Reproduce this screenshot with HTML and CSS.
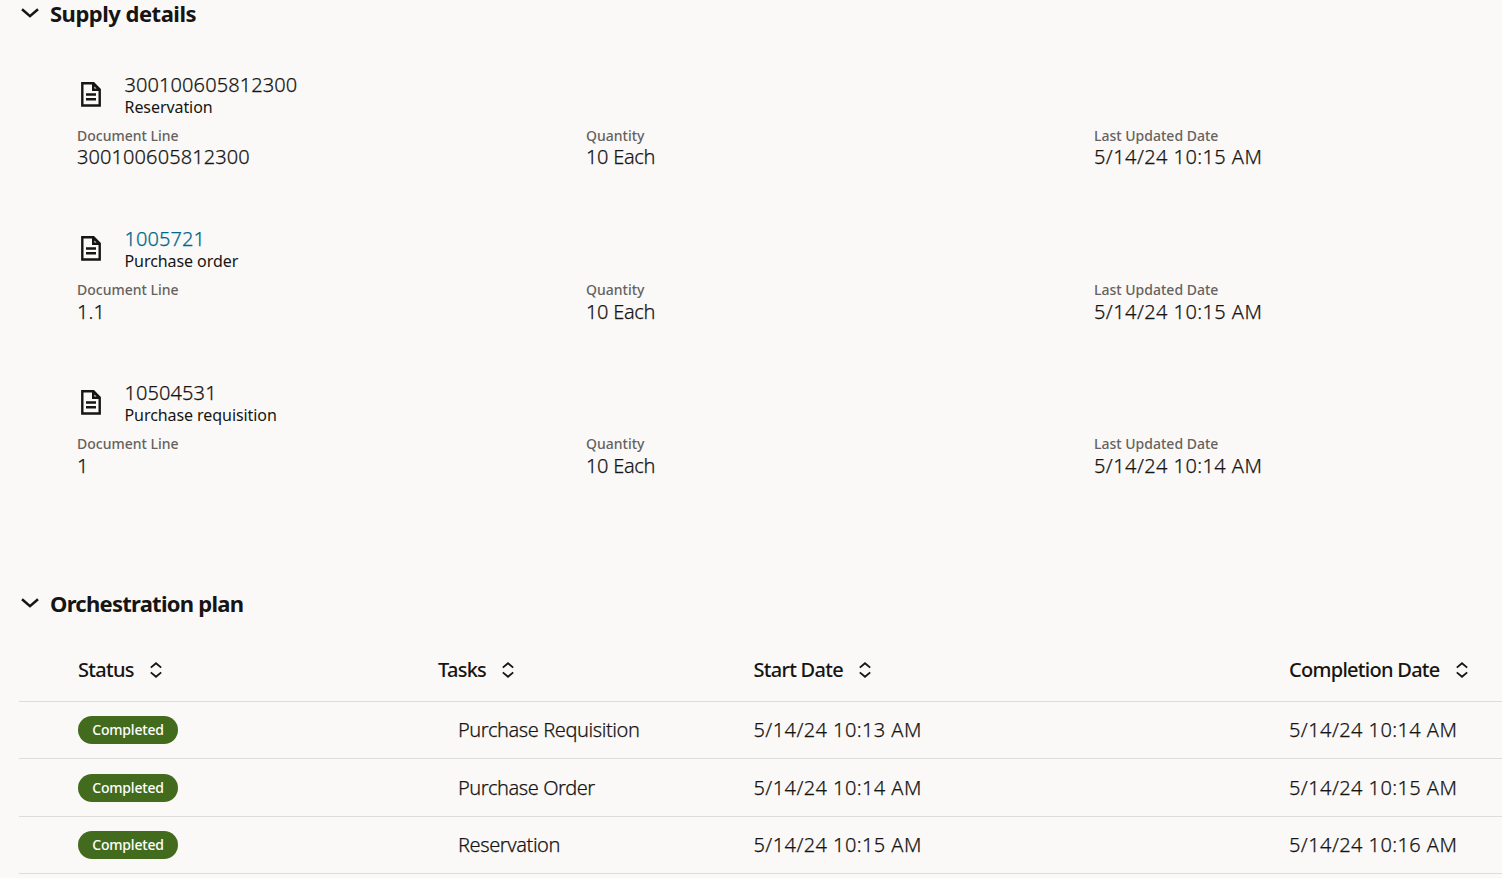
FILE: index.html
```html
<!DOCTYPE html>
<html lang="en">

<head>
    <meta charset="UTF-8">
    <meta name="viewport" content="width=device-width, initial-scale=1.0">
    <title>Supply details</title>
    <link rel="stylesheet" href="styles.css">
</head>

<body>
    <!-- shared icons -->
    <svg class="sprite" width="0" height="0">
        <symbol id="chevron" viewBox="0 0 18 10">
            <path d="M1 1.2L9 8.1L17 1.2" fill="none" stroke="currentColor" stroke-width="2.5" />
        </symbol>
        <symbol id="doc" viewBox="0 0 20 25">
            <path d="M1.3 1.3H12.5L18.7 7.5V23.5H1.3Z" fill="none" stroke="currentColor" stroke-width="2.4" />
            <path d="M11 1H13L19 7V9H11ZM13.4 4.4V6.6H15.6Z" fill="currentColor" fill-rule="evenodd" />
            <path d="M5 12.5H15M5 17.3H15" stroke="currentColor" stroke-width="2.4" />
        </symbol>
        <symbol id="sort" viewBox="0 0 12 16">
            <path d="M.8 5.6L6 1.2L11.2 5.6M.8 10.4L6 14.8L11.2 10.4" fill="none" stroke="currentColor" stroke-width="1.8" />
        </symbol>
    </svg>

    <section class="supply">
        <h2><svg class="chevron"><use href="#chevron" /></svg>Supply details</h2>
        <div class="docList">
            <article class="doc">
                <div class="docHead">
                    <svg class="docIcon"><use href="#doc" /></svg>
                    <div>
                        <p class="value">300100605812300</p>
                        <p class="type">Reservation</p>
                    </div>
                </div>
                <dl class="fields">
                    <div><dt>Document Line</dt><dd class="value">300100605812300</dd></div>
                    <div><dt>Quantity</dt><dd class="value qty">10 Each</dd></div>
                    <div><dt>Last Updated Date</dt><dd class="value date">5/14/24 10:15 AM</dd></div>
                </dl>
            </article>
            <article class="doc">
                <div class="docHead">
                    <svg class="docIcon"><use href="#doc" /></svg>
                    <div>
                        <p class="value"><a href="#">1005721</a></p>
                        <p class="type">Purchase order</p>
                    </div>
                </div>
                <dl class="fields">
                    <div><dt>Document Line</dt><dd class="value">1.1</dd></div>
                    <div><dt>Quantity</dt><dd class="value qty">10 Each</dd></div>
                    <div><dt>Last Updated Date</dt><dd class="value date">5/14/24 10:15 AM</dd></div>
                </dl>
            </article>
            <article class="doc">
                <div class="docHead">
                    <svg class="docIcon"><use href="#doc" /></svg>
                    <div>
                        <p class="value">10504531</p>
                        <p class="type">Purchase requisition</p>
                    </div>
                </div>
                <dl class="fields">
                    <div><dt>Document Line</dt><dd class="value">1</dd></div>
                    <div><dt>Quantity</dt><dd class="value qty">10 Each</dd></div>
                    <div><dt>Last Updated Date</dt><dd class="value date">5/14/24 10:14 AM</dd></div>
                </dl>
            </article>
        </div>
    </section>

    <section class="plan">
        <h2><svg class="chevron"><use href="#chevron" /></svg>Orchestration plan</h2>
        <div class="table">
            <div class="row head">
                <div>Status<svg class="sort"><use href="#sort" /></svg></div>
                <div>Tasks<svg class="sort"><use href="#sort" /></svg></div>
                <div>Start Date<svg class="sort"><use href="#sort" /></svg></div>
                <div>Completion Date<svg class="sort"><use href="#sort" /></svg></div>
            </div>
            <div class="row">
                <div><span class="badge">Completed</span></div>
                <div class="task">Purchase Requisition</div>
                <div class="date">5/14/24 10:13 AM</div>
                <div class="date">5/14/24 10:14 AM</div>
            </div>
            <div class="row">
                <div><span class="badge">Completed</span></div>
                <div class="task">Purchase Order</div>
                <div class="date">5/14/24 10:14 AM</div>
                <div class="date">5/14/24 10:15 AM</div>
            </div>
            <div class="row">
                <div><span class="badge">Completed</span></div>
                <div class="task">Reservation</div>
                <div class="date">5/14/24 10:15 AM</div>
                <div class="date">5/14/24 10:16 AM</div>
            </div>
        </div>
    </section>
</body>

</html>
```
FILE: styles.css
```css
* {
    margin: 0;
    padding: 0;
    box-sizing: border-box;
}

body {
    height: 878px;
    overflow: hidden;
    background: #fbf9f8;
    color: #161513;
    font-family: "Noto Sans", sans-serif;
    font-size: 20px;
    line-height: 24px;
}

svg {
    flex: none;
    display: block;
}

.sprite {
    display: none;
}

h2 {
    display: flex;
    align-items: center;
    height: 26px;
    padding-left: 21px;
    font-size: 22px;
    font-weight: 700;
    line-height: 26px;
    letter-spacing: -0.5px;
}

.plan h2 {
    letter-spacing: -0.74px;
}

.chevron {
    width: 18px;
    height: 10px;
    margin-right: 11px;
}

.supply {
    height: 590px;
}

.docList {
    padding: 47px 0 0 77px;
}

.doc {
    height: 154.1px;
}

.docHead {
    display: flex;
    align-items: center;
    height: 44px;
}

.docIcon {
    width: 20px;
    height: 25px;
    margin: 0 23.5px 2px 4px;
}

.type {
    font-size: 16px;
    line-height: 20px;
    letter-spacing: -0.07px;
}

a {
    color: #00688c;
    text-decoration: none;
}

.fields {
    display: grid;
    grid-template-columns: 509px 508px auto;
    padding-top: 10px;
}

.value,
.date,
.task {
    font-weight: 300;
    -webkit-text-stroke: 0.25px;
}

.value {
    letter-spacing: 0.1px;
}

.qty {
    letter-spacing: -0.3px;
}

.date {
    letter-spacing: 0.42px;
}

dt {
    color: #65625f;
    font-size: 14px;
    font-weight: 500;
    line-height: 18.45px;
}

.table {
    margin: 24px 0 0 19px;
}

.row {
    display: grid;
    grid-template-columns: 360px 315.5px 535.5px auto;
    align-items: center;
    height: 57.4px;
    padding-left: 59px;
    border-bottom: 1px solid #dfdddb;
}

.row > div {
    display: flex;
    align-items: center;
}

.head {
    height: 62px;
    padding-bottom: 1px;
    font-weight: 500;
    letter-spacing: -0.72px;
}

.sort {
    width: 12px;
    height: 16px;
    margin-left: 16px;
}

.row > .task {
    padding-left: 20px;
    letter-spacing: -0.42px;
}

.badge {
    width: 100px;
    height: 28px;
    border-radius: 14px;
    background: #436b1d;
    color: #fff;
    font-size: 14px;
    font-weight: 500;
    line-height: 28px;
    letter-spacing: -0.2px;
    text-align: center;
}
```
